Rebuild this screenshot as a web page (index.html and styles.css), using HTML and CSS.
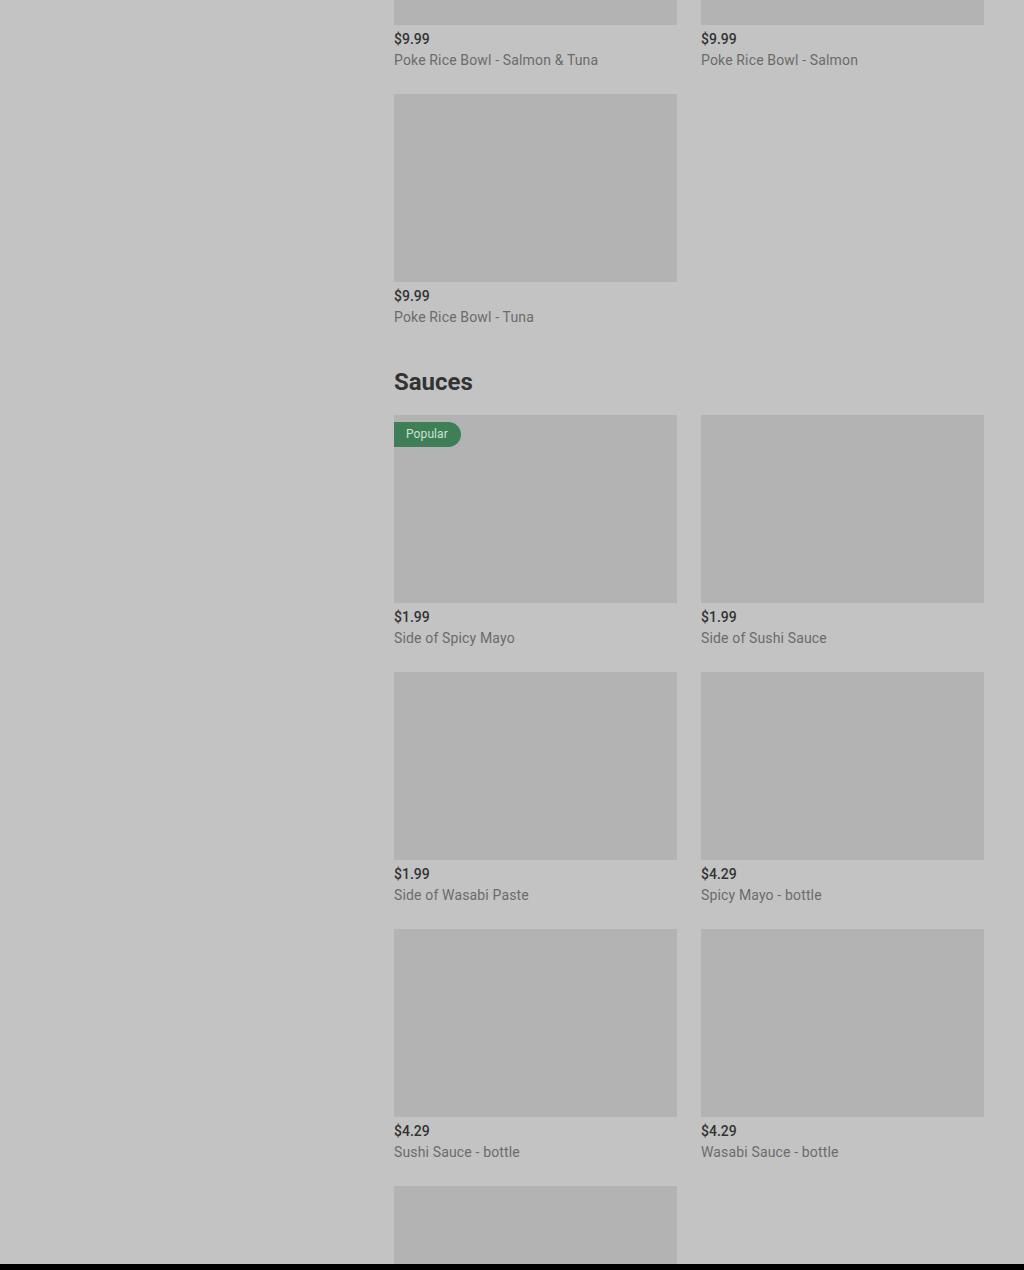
FILE: index.html
```html
<!DOCTYPE html>
<html lang="en">
<head>
    <meta charset="UTF-8">
    <meta name="viewport" content="width=device-width, initial-scale=1.0">
    <title>Menu</title>
    <link rel="stylesheet" href="styles.css">
</head>
<body>
    <div class="page">
        <aside class="sidebar"></aside>
        <main class="menu">
            <section class="section first">
                <div class="grid">
                    <div class="card">
                        <div class="photo"></div>
                        <div class="price">$9.99</div>
                        <div class="name">Poke Rice Bowl - Salmon &amp; Tuna</div>
                    </div>
                    <div class="card">
                        <div class="photo"></div>
                        <div class="price">$9.99</div>
                        <div class="name">Poke Rice Bowl - Salmon</div>
                    </div>
                    <div class="card">
                        <div class="photo"></div>
                        <div class="price">$9.99</div>
                        <div class="name">Poke Rice Bowl - Tuna</div>
                    </div>
                </div>
            </section>

            <section class="section">
                <h2 class="section-title">Sauces</h2>
                <div class="grid">
                    <div class="card">
                        <div class="photo">
                            <span class="badge">Popular</span>
                        </div>
                        <div class="price">$1.99</div>
                        <div class="name">Side of Spicy Mayo</div>
                    </div>
                    <div class="card">
                        <div class="photo"></div>
                        <div class="price">$1.99</div>
                        <div class="name">Side of Sushi Sauce</div>
                    </div>
                    <div class="card">
                        <div class="photo"></div>
                        <div class="price">$1.99</div>
                        <div class="name">Side of Wasabi Paste</div>
                    </div>
                    <div class="card">
                        <div class="photo"></div>
                        <div class="price">$4.29</div>
                        <div class="name">Spicy Mayo - bottle</div>
                    </div>
                    <div class="card">
                        <div class="photo"></div>
                        <div class="price">$4.29</div>
                        <div class="name">Sushi Sauce - bottle</div>
                    </div>
                    <div class="card">
                        <div class="photo"></div>
                        <div class="price">$4.29</div>
                        <div class="name">Wasabi Sauce - bottle</div>
                    </div>
                    <div class="card">
                        <div class="photo"></div>
                    </div>
                </div>
            </section>
        </main>
    </div>
    <div class="bottom-bar"></div>
</body>
</html>
```

FILE: styles.css
```css
body {
    margin: 0;
    background: #c3c3c3;
    font-family: Roboto, "Liberation Sans", Arial, sans-serif;
    color: #333;
    overflow: hidden;
}
.page {
    display: flex;
    padding: 0 40px;
    height: 1264px;
    overflow: hidden;
}
.sidebar {
    width: 354px;
    flex-shrink: 0;
}
.menu {
    width: 590px;
}
.section.first {
    margin-top: -163px;
}
.section-title {
    font-size: 24px;
    line-height: 32px;
    font-weight: 700;
    color: #333;
    margin: 15px 0 17px;
}
.grid {
    display: grid;
    grid-template-columns: 1fr 1fr;
    column-gap: 24px;
}
.card {
    margin-bottom: 24px;
}
.photo {
    height: 188px;
    background: #b3b3b3;
    position: relative;
}
.badge {
    position: absolute;
    top: 7px;
    left: 0;
    height: 25px;
    line-height: 25px;
    padding: 0 13px 0 12px;
    font-size: 12px;
    letter-spacing: 0.1px;
    color: #cfe0d4;
    background: #3e7f58;
    border-radius: 0 13px 13px 0;
}
.price {
    margin-top: 4px;
    font-size: 14px;
    line-height: 20px;
    font-weight: 500;
    color: #333;
}
.name {
    padding-top: 1px;
    font-size: 14px;
    line-height: 20px;
    letter-spacing: 0.15px;
    color: #6b6b6b;
}
.bottom-bar {
    position: fixed;
    left: 0;
    right: 0;
    bottom: 0;
    height: 6px;
    background: #000;
}
```
